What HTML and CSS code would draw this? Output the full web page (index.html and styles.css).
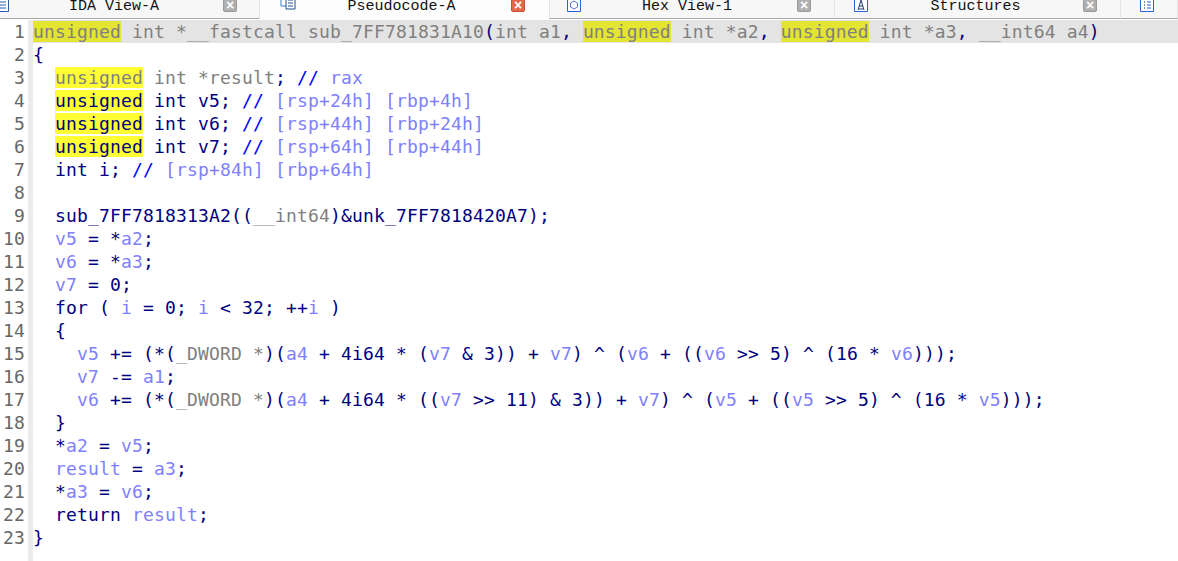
FILE: index.html
```html
<!DOCTYPE html>
<html>
<head>
<meta charset="utf-8">
<title>Pseudocode-A</title>
<link rel="stylesheet" href="styles.css">
</head>
<body>
<div class="app">
  <div class="tabs">
    <div class="tab t1">
      <svg class="ico" viewBox="0 0 14 14"><path d="M.5.5h13v13H.5z" fill="#fff" stroke="#2a5caa"/><path d="M3 4h8M3 7h8M3 10h8" stroke="#2a5caa"/></svg>
      <span class="name">IDA View-A</span>
      <span class="close">×</span>
    </div>
    <div class="tab t2 active">
      <svg class="ico wide" viewBox="0 0 16 14"><path d="M1 1h6v9H1z" fill="#fff" stroke="#3b78d8"/><path d="M6 1h9v12H6z" fill="#fff" stroke="#1f4e8c"/><path d="M8 4h5M8 7h5M8 10h5" stroke="#1f4e8c"/></svg>
      <span class="name">Pseudocode-A</span>
      <span class="close red">×</span>
    </div>
    <div class="tab t3">
      <svg class="ico" viewBox="0 0 14 14"><path d="M.5.5h13v13H.5z" fill="#fff" stroke="#2a62d8"/><path d="M7 3l3.500 2v4L7 11 3.500 9V5z" fill="none" stroke="#5a6fe0"/></svg>
      <span class="name">Hex View-1</span>
      <span class="close">×</span>
    </div>
    <div class="tab t4">
      <svg class="ico" viewBox="0 0 14 14"><path d="M.5.5h13v13H.5z" fill="#fff" stroke="#2a62d8"/><path d="M4 12L7 2l3 10M5 8h4M5 11h4" fill="none" stroke="#1f3f70"/></svg>
      <span class="name name-s">Structures</span>
      <span class="close">×</span>
    </div>
    <div class="tab t5">
      <svg class="ico" viewBox="0 0 14 14"><path d="M.5.5h13v13H.5z" fill="#fff" stroke="#2a62d8"/><path d="M4 4h1M4 7h1M4 10h1" stroke="#123"/><path d="M7 4h4M7 7h4M7 10h4" stroke="#2a62d8"/></svg>
    </div>
  </div>
  <div class="editor">
    <div class="gutter">
      <div>1</div><div>2</div><div>3</div><div>4</div><div>5</div><div>6</div><div>7</div><div>8</div><div>9</div><div>10</div><div>11</div><div>12</div><div>13</div><div>14</div><div>15</div><div>16</div><div>17</div><div>18</div><div>19</div><div>20</div><div>21</div><div>22</div><div>23</div>
    </div>
    <div class="code">
      <div class="line cur"><span class="hl-cur g">unsigned</span><span class="g"> int *__fastcall sub_7FF781831A10</span>(<span class="g">int a1</span>, <span class="hl-cur g">unsigned</span><span class="g"> int *a2</span>, <span class="hl-cur g">unsigned</span><span class="g"> int *a3</span>, <span class="g">__int64 a4</span>)</div>
      <div class="line">{</div>
      <div class="line">  <span class="hl g">unsigned</span><span class="g"> int *result</span>; <span class="c">//</span> <span class="v">rax</span></div>
      <div class="line">  <span class="hl">unsigned</span> int v5; <span class="c">//</span> <span class="v">[rsp+24h] [rbp+4h]</span></div>
      <div class="line">  <span class="hl">unsigned</span> int v6; <span class="c">//</span> <span class="v">[rsp+44h] [rbp+24h]</span></div>
      <div class="line">  <span class="hl">unsigned</span> int v7; <span class="c">//</span> <span class="v">[rsp+64h] [rbp+44h]</span></div>
      <div class="line">  int i; <span class="c">//</span> <span class="v">[rsp+84h] [rbp+64h]</span></div>
      <div class="line"> </div>
      <div class="line">  sub_7FF7818313A2((<span class="g">__int64</span>)&amp;unk_7FF7818420A7);</div>
      <div class="line">  <span class="v">v5</span> = *<span class="v">a2</span>;</div>
      <div class="line">  <span class="v">v6</span> = *<span class="v">a3</span>;</div>
      <div class="line">  <span class="v">v7</span> = 0;</div>
      <div class="line">  for ( <span class="v">i</span> = 0; <span class="v">i</span> &lt; 32; ++<span class="v">i</span> )</div>
      <div class="line">  {</div>
      <div class="line">    <span class="v">v5</span> += (*(<span class="g">_DWORD *</span>)(<span class="v">a4</span> + 4i64 * (<span class="v">v7</span> &amp; 3)) + <span class="v">v7</span>) ^ (<span class="v">v6</span> + ((<span class="v">v6</span> &gt;&gt; 5) ^ (16 * <span class="v">v6</span>)));</div>
      <div class="line">    <span class="v">v7</span> -= <span class="v">a1</span>;</div>
      <div class="line">    <span class="v">v6</span> += (*(<span class="g">_DWORD *</span>)(<span class="v">a4</span> + 4i64 * ((<span class="v">v7</span> &gt;&gt; 11) &amp; 3)) + <span class="v">v7</span>) ^ (<span class="v">v5</span> + ((<span class="v">v5</span> &gt;&gt; 5) ^ (16 * <span class="v">v5</span>)));</div>
      <div class="line">  }</div>
      <div class="line">  *<span class="v">a2</span> = <span class="v">v5</span>;</div>
      <div class="line">  <span class="v">result</span> = <span class="v">a3</span>;</div>
      <div class="line">  *<span class="v">a3</span> = <span class="v">v6</span>;</div>
      <div class="line">  return <span class="v">result</span>;</div>
      <div class="line">}</div>
    </div>
  </div>
</div>
</body>
</html>
```

FILE: styles.css
```css
html, body {
  margin: 0;
  padding: 0;
  background: #fff;
}
.app {
  width: 1178px;
  height: 561px;
  overflow: hidden;
  display: flex;
  flex-direction: column;
}
.tabs {
  display: flex;
  height: 20px;
  flex: none;
  overflow: hidden;
  background: #fff;
}
.tab {
  box-sizing: border-box;
  height: 19px;
  display: flex;
  align-items: flex-start;
  flex: none;
  background: #f7f7f7;
  border-bottom: 1px solid #a8a8a8;
  border-right: 1px solid #e4e4e4;
}
.tab.active {
  height: 20px;
  background: #fdfdfd;
  border-bottom: 0;
}
.t1 { width: 265px; margin-left: -5px; padding-right: 22px; }
.t2 { width: 290px; padding: 0 24px 0 20px; }
.t3 { width: 285px; padding: 0 23px 0 17px; }
.t4 { width: 286px; padding: 0 23px 0 19px; }
.t5 { flex: 1; padding-left: 19px; }
.ico {
  width: 14px;
  height: 14px;
  margin-top: -2px;
  flex: none;
}
.ico.wide {
  width: 16px;
  margin-top: -4px;
}
.name {
  flex: 1;
  padding-right: 4px;
  text-align: center;
  font: 15px/10px "Liberation Mono", monospace;
  color: #111;
  margin-top: 2px;
}
.name-s {
  padding-right: 0;
}
.close {
  box-sizing: border-box;
  width: 14px;
  height: 13px;
  margin-top: -1px;
  flex: none;
  background: #b0b0b0;
  border: 1px solid #999;
  border-radius: 2px;
  color: #fff;
  font: bold 14px/11px "Liberation Sans", sans-serif;
  text-align: center;
}
.close.red {
  background: #e8674a;
  border-color: #c94f35;
}
.editor {
  flex: 1;
  display: flex;
  min-height: 0;
  font: 18px/23px "DejaVu Sans Mono", monospace;
  letter-spacing: 0.16px;
}
.gutter {
  box-sizing: border-box;
  width: 33px;
  flex: none;
  background: #fff;
  border-right: 5px solid #ececec;
  padding-right: 3px;
  text-align: right;
  color: #666;
}
.code {
  flex: 1;
  color: #000080;
}
.line {
  height: 23px;
  white-space: pre;
}
.cur {
  background: #e4e4e4;
}
.g { color: #808080; }
.v { color: #8080ff; }
.c { color: #0000ff; }
.hl { background: #ffff33; }
.hl-cur { background: #e4e432; }
```
